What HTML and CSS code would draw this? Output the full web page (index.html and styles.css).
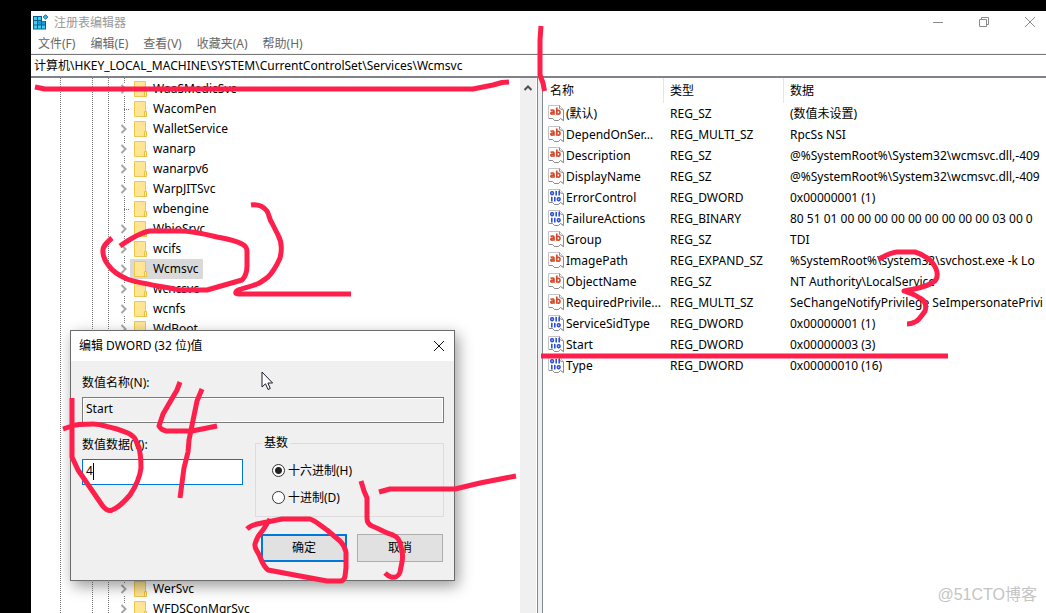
FILE: index.html
```html
<!DOCTYPE html>
<html lang="zh-CN">
<head>
<meta charset="utf-8">
<title>注册表编辑器</title>
<link rel="stylesheet" href="styles.css">
</head>
<body>
<svg class="defs" aria-hidden="true">
  <symbol id="folder" viewBox="0 0 13 16">
    <path d="M0.5 0.5H11.5V15.5H0.5Z" fill="#ffe594" stroke="#edc84b"/>
    <path d="M10.5 10.5H12.5V15.5H10.5Z" fill="#ffefb5" stroke="#e9c040"/>
  </symbol>
  <symbol id="string" viewBox="0 0 16 17">
    <path d="M0.5 0.5H11.5L15.5 4.5V16L12.5 13.5L10.5 15.5H6.5L4.5 13.5H0.5Z" fill="#fff" stroke="#c4c4c4"/>
    <path d="M11.5 0.5V3.5L15.5 5V15.5L12.5 13.5L10.5 15.5H6.5L4.5 13.5H1" fill="none" stroke="#8c8c8c"/>
    <g fill="none" stroke="#d84a2b" stroke-width="1.7">
      <path d="M2.5 5.4Q6 4.3 6 6.4V9.8M6 7.3Q2.8 6.9 2.8 8.4Q3.2 9.9 6 8.6"/>
      <path d="M8.8 2.6V9.8M8.8 5.8Q12 4.4 12 7.2Q12 10 8.8 8.8"/>
    </g>
  </symbol>
  <symbol id="binary" viewBox="0 0 16 17">
    <path d="M0.5 0.5H11.5L15.5 4.5V16L12.5 13.5L10.5 15.5H6.5L4.5 13.5H0.5Z" fill="#fff" stroke="#c4c4c4"/>
    <path d="M11.5 0.5V3.5L15.5 5V15.5L12.5 13.5L10.5 15.5H6.5L4.5 13.5H1" fill="none" stroke="#8c8c8c"/>
    <g fill="none" stroke="#2c4fd8" stroke-width="1.6">
      <rect x="2.8" y="2.8" width="2.6" height="2.8" rx="1"/>
      <path d="M8.2 2V6.4M11.2 2V6.4M7.4 2.6H8.2M10.4 2.6H11.2M3.8 8V12.4M6.8 8V12.4M3 8.6H3.8M6 8.6H6.8"/>
      <rect x="9.4" y="8.8" width="2.6" height="2.8" rx="1"/>
    </g>
  </symbol>
  <symbol id="chevron" viewBox="0 0 12 12">
    <path d="M3.5 2L7.5 6L3.5 10" fill="none" stroke="#a6a6a6" stroke-width="2"/>
  </symbol>
</svg>

<main class="window">
  <header class="titlebar">
    <svg class="app-icon" viewBox="0 0 16 16" aria-hidden="true">
      <path d="M0 2H9V7H13V15.5H0Z" fill="#0b5f87"/>
      <path d="M1 3H4V6H1ZM5 3H8V6H5ZM1 7H4V10.5H1ZM1 11.5H4V14.5H1ZM5 11.5H8V14.5H5ZM9 11.5H12V14.5H9Z" fill="#3fcdf7"/>
      <path d="M5 7H8V10.5H5ZM9 7.5H12V10.5H9Z" fill="#12a0dc"/>
      <path d="M12.5 0.7L14.8 3L12.5 5.3L10.2 3Z" fill="#3fbbe8" stroke="#0b6f9d"/>
    </svg>
    <h1 class="app-title">注册表编辑器</h1>
    <div class="window-buttons">
      <button class="window-button" aria-label="最小化"><svg viewBox="0 0 12 12"><path d="M1 6.5H11"/></svg></button>
      <button class="window-button" aria-label="还原"><svg viewBox="0 0 12 12"><path d="M1.5 3.5H8.5V10.5H1.5ZM3.5 3.5V1.5H10.5V8.5H8.5"/></svg></button>
      <button class="window-button" aria-label="关闭"><svg viewBox="0 0 12 12"><path d="M1 1L11 11M11 1L1 11"/></svg></button>
    </div>
  </header>
  <nav class="menubar">
    <button class="menu">文件(F)</button>
    <button class="menu">编辑(E)</button>
    <button class="menu">查看(V)</button>
    <button class="menu">收藏夹(A)</button>
    <button class="menu">帮助(H)</button>
  </nav>
  <input class="address" aria-label="地址" value="计算机\HKEY_LOCAL_MACHINE\SYSTEM\CurrentControlSet\Services\Wcmsvc">

  <div class="panes">
    <section class="tree-pane">
      <ul class="tree">
        <li class="node"><svg class="twist"><use href="#chevron"/></svg><span class="key"><svg class="folder"><use href="#folder"/></svg>WaaSMedicSvc</span></li>
        <li class="node"><span class="branch"></span><span class="key"><svg class="folder"><use href="#folder"/></svg>WacomPen</span></li>
        <li class="node"><svg class="twist"><use href="#chevron"/></svg><span class="key"><svg class="folder"><use href="#folder"/></svg>WalletService</span></li>
        <li class="node"><svg class="twist"><use href="#chevron"/></svg><span class="key"><svg class="folder"><use href="#folder"/></svg>wanarp</span></li>
        <li class="node"><svg class="twist"><use href="#chevron"/></svg><span class="key"><svg class="folder"><use href="#folder"/></svg>wanarpv6</span></li>
        <li class="node"><svg class="twist"><use href="#chevron"/></svg><span class="key"><svg class="folder"><use href="#folder"/></svg>WarpJITSvc</span></li>
        <li class="node"><span class="branch"></span><span class="key"><svg class="folder"><use href="#folder"/></svg>wbengine</span></li>
        <li class="node"><svg class="twist"><use href="#chevron"/></svg><span class="key"><svg class="folder"><use href="#folder"/></svg>WbioSrvc</span></li>
        <li class="node"><svg class="twist"><use href="#chevron"/></svg><span class="key"><svg class="folder"><use href="#folder"/></svg>wcifs</span></li>
        <li class="node"><svg class="twist"><use href="#chevron"/></svg><span class="key selected"><svg class="folder"><use href="#folder"/></svg>Wcmsvc</span></li>
        <li class="node"><svg class="twist"><use href="#chevron"/></svg><span class="key"><svg class="folder"><use href="#folder"/></svg>wcncsvc</span></li>
        <li class="node"><svg class="twist"><use href="#chevron"/></svg><span class="key"><svg class="folder"><use href="#folder"/></svg>wcnfs</span></li>
        <li class="node"><svg class="twist"><use href="#chevron"/></svg><span class="key"><svg class="folder"><use href="#folder"/></svg>WdBoot</span></li>
        <li class="covered"></li>
        <li class="node"><svg class="twist"><use href="#chevron"/></svg><span class="key"><svg class="folder"><use href="#folder"/></svg>WerSvc</span></li>
        <li class="node"><svg class="twist"><use href="#chevron"/></svg><span class="key"><svg class="folder"><use href="#folder"/></svg>WFDSConMgrSvc</span></li>
      </ul>
      <div class="scrollbar">
        <button class="scroll-up" aria-label="向上滚动"><svg viewBox="0 0 10 10"><path d="M1.5 7L5 3.5L8.5 7"/></svg></button>
      </div>
    </section>
    <div class="splitter"></div>
    <section class="list-pane">
      <table class="values">
        <thead>
          <tr><th class="col-name">名称</th><th class="col-type">类型</th><th>数据</th></tr>
        </thead>
        <tbody>
          <tr><td class="name"><svg class="kind"><use href="#string"/></svg>(默认)</td><td>REG_SZ</td><td>(数值未设置)</td></tr>
          <tr><td class="name"><svg class="kind"><use href="#string"/></svg>DependOnSer...</td><td>REG_MULTI_SZ</td><td>RpcSs NSI</td></tr>
          <tr><td class="name"><svg class="kind"><use href="#string"/></svg>Description</td><td>REG_SZ</td><td>@%SystemRoot%\System32\wcmsvc.dll,-409</td></tr>
          <tr><td class="name"><svg class="kind"><use href="#string"/></svg>DisplayName</td><td>REG_SZ</td><td>@%SystemRoot%\System32\wcmsvc.dll,-409</td></tr>
          <tr><td class="name"><svg class="kind"><use href="#binary"/></svg>ErrorControl</td><td>REG_DWORD</td><td>0x00000001 (1)</td></tr>
          <tr><td class="name"><svg class="kind"><use href="#binary"/></svg>FailureActions</td><td>REG_BINARY</td><td>80 51 01 00 00 00 00 00 00 00 00 00 03 00 0</td></tr>
          <tr><td class="name"><svg class="kind"><use href="#string"/></svg>Group</td><td>REG_SZ</td><td>TDI</td></tr>
          <tr><td class="name"><svg class="kind"><use href="#string"/></svg>ImagePath</td><td>REG_EXPAND_SZ</td><td>%SystemRoot%\system32\svchost.exe -k Lo</td></tr>
          <tr><td class="name"><svg class="kind"><use href="#string"/></svg>ObjectName</td><td>REG_SZ</td><td>NT Authority\LocalService</td></tr>
          <tr><td class="name"><svg class="kind"><use href="#string"/></svg>RequiredPrivile...</td><td>REG_MULTI_SZ</td><td>SeChangeNotifyPrivilege SeImpersonatePrivi</td></tr>
          <tr><td class="name"><svg class="kind"><use href="#binary"/></svg>ServiceSidType</td><td>REG_DWORD</td><td>0x00000001 (1)</td></tr>
          <tr><td class="name"><svg class="kind"><use href="#binary"/></svg>Start</td><td>REG_DWORD</td><td>0x00000003 (3)</td></tr>
          <tr><td class="name"><svg class="kind"><use href="#binary"/></svg>Type</td><td>REG_DWORD</td><td>0x00000010 (16)</td></tr>
        </tbody>
      </table>
    </section>
  </div>
</main>

<form class="dialog" role="dialog" aria-labelledby="dialog-title">
  <div class="dialog-bar">
    <h2 class="dialog-title" id="dialog-title">编辑 DWORD (32 位)值</h2>
    <button class="dialog-close" type="button" aria-label="关闭"><svg viewBox="0 0 12 12"><path d="M1 1L11 11M11 1L1 11"/></svg></button>
  </div>
  <div class="dialog-body">
    <label class="label" for="value-name">数值名称(N):</label>
    <input class="field readonly" id="value-name" value="Start" readonly>
    <div class="columns">
      <div class="data">
        <label class="label" for="value-data">数值数据(V):</label>
        <div class="caret-box"><input class="field active" id="value-data" value="4"></div>
      </div>
      <fieldset class="base">
        <legend>基数</legend>
        <label class="option"><input type="radio" name="base" checked>十六进制(H)</label>
        <label class="option"><input type="radio" name="base">十进制(D)</label>
      </fieldset>
    </div>
    <div class="actions">
      <button class="push default" type="button">确定</button>
      <button class="push" type="button">取消</button>
    </div>
  </div>
</form>

<svg class="pointer" viewBox="0 0 13 20" aria-hidden="true"><path d="M1 1V16L4.5 12.8L7 18.5L9.3 17.5L6.9 12H11.6Z" fill="#fff" stroke="#1a1a2a"/></svg>

<svg class="ink" viewBox="0 0 1046 613" aria-hidden="true">
  <path d="M35 87L45 89H473L493 85L502 82.5L509 82"/>
  <path d="M541 26L540 40V75L543 83L544.5 91"/>
  <path d="M112 238C106 243 102 247 103 252C103 257 105 261 109 266C113 272 118 275 127 279C137 283 160 286 180 290H207L242 280C246 276 247 272 247 266V252C247 248 246 246 242 244C235 240 228 239 217 237C205 234 192 231 180 231H150C143 232 130 239 120 246"/>
  <path d="M251 205C258 204 263 206 267 211C270 217 269 219 272 223L278 235C282 242 282 250 280 258C277 265 274 271 268 277C263 281 260 283 257 284C248 288 236 289 236 292Q235 294 239 294H351"/>
  <path d="M879 259C886 255 892 252 897 252H915C922 254 926 257 930 260C935 265 936 268 937 272C938 278 936 281 932 283C925 287 910 290 904 291C910 293 914 294 918 297C925 300 927 305 925 311C921 317 918 321 915 322Q911 324 907 324"/>
  <path d="M541 356H948"/>
  <path d="M180 382L177 390L163 414L159 426Q161 430 166 431H192L217 426"/>
  <path d="M202 389L197 401L189 440L188 452L184 468L180 498"/>
  <path d="M72 398V457L78 470L102 505C105 509 108 512 112 510C118 508 124 502 130 495C136 486 140 476 141 468C141 458 140 450 138 445C135 438 134 436 128 433C122 431 118 429 113 428C105 426 100 424 93 424C84 424 76 424 72 426L63 429"/>
  <path d="M247 529C250 526 253 525 257 524L282 519H310C316 521 321 526 327 530L340 541C344 545 345 548 346 552V568C345 574 346 581 340 581H327L300 576L268 570C264 567 262 562 260 557C258 551 254 549 255 544C257 536 260 534 263 530L270 519"/>
  <path d="M361 481L364 491L367 498V518Q367 524 372 526C380 529 385 533 393 535C398 537 400 540 401 547C403 553 403 557 402 562L400 572C399 576 395 578 391 577Q388 576 385 573"/>
  <path d="M379 492L390 489H455L480 483L516 476"/>
</svg>
<p class="watermark">@51CTO博客</p>
</body>
</html>
```
FILE: styles.css
```css
* { box-sizing: border-box; }

body {
  margin: 0;
  height: 100vh;
  padding: 11px 0 0 31px;
  position: relative;
  overflow: hidden;
  background: #000;
  color: #000;
  font: 12px/20px "Noto Sans", "Noto Sans CJK SC", sans-serif;
}

button, input { font: inherit; color: inherit; }
button { padding: 0; border: 0; background: none; }
h1, h2, p, ul { margin: 0; padding: 0; font-size: inherit; font-weight: 400; }
svg { display: block; flex: none; }
.defs { position: absolute; width: 0; height: 0; }

.window { display: flex; flex-direction: column; height: 100%; overflow: hidden; background: #fff; }

.titlebar { display: flex; align-items: center; height: 22px; padding-left: 2px; color: #999; }
.app-icon { width: 16px; height: 16px; }
.app-title { margin-left: 5px; padding-top: 2px; }
.window-buttons { display: flex; margin: 0 -7px 0 auto; }
.window-button { display: grid; place-items: center; width: 46px; height: 22px; }
.window-button svg { width: 12px; height: 12px; fill: none; stroke: #8a8a8a; }

.menubar { display: flex; gap: 15px; height: 21px; padding: 1px 0 0 7px; border-bottom: 1px solid #f0f0f0; color: #666; }

.address { width: 100%; height: 24px; padding: 0 3px 1px; border: 0; border-top: 1px solid #7a7a7a; border-bottom: 2px solid #7f8288; background: #fff; }

.panes { display: flex; flex: 1; min-height: 0; }

.tree-pane { display: flex; width: 506px; overflow: hidden; }
.tree {
  flex: 1;
  padding-top: 1px;
  list-style: none;
  background-image:
    repeating-linear-gradient(#777 0 1px, #fff 1px 2px),
    repeating-linear-gradient(#777 0 1px, #fff 1px 2px),
    repeating-linear-gradient(#777 0 1px, #fff 1px 2px),
    repeating-linear-gradient(#777 0 1px, #fff 1px 2px);
  background-repeat: no-repeat;
  background-size: 1px 100%;
  background-position: 29px 0, 61px 0, 77px 0, 93px 0;
}
.node { display: flex; align-items: center; height: 20px; padding-left: 87px; }
.twist { width: 12px; height: 12px; background: #fff; }
.branch { width: 12px; height: 1px; background: repeating-linear-gradient(90deg, #777 0 1px, #fff 1px 2px) 6px 0 no-repeat; }
.key { display: flex; align-items: center; gap: 6px; height: 20px; padding: 0 4px; }
.selected { background: #d9d9d9; }
.folder { width: 13px; height: 16px; }
.covered { height: 240px; }

.scrollbar { width: 16px; margin-right: 1px; background: #f0f0f0; }
.scroll-up { display: grid; place-items: center; width: 16px; height: 20px; }
.scroll-up svg { width: 10px; height: 10px; fill: none; stroke: #505050; stroke-width: 2; }

.splitter { width: 6px; border: solid #828790; border-width: 0 1px; background: #f0f0f0; }

.list-pane { flex: 1; min-width: 0; overflow: hidden; }
.values { width: 100%; table-layout: fixed; border-spacing: 0; font-size: 12px; white-space: nowrap; }
.values th { height: 25px; padding: 0 0 0 6px; border-right: 1px solid #e5e5e5; font-weight: 400; text-align: left; }
.values th:last-child { border: 0; }
.values .col-name { width: 121px; padding-left: 7px; }
.col-type { width: 120px; }
.values td { height: 21px; padding: 0 0 0 6px; }
.values .name { display: flex; align-items: center; gap: 2px; padding-left: 5px; }
.kind { width: 16px; height: 17px; }

.dialog { position: absolute; left: 70px; top: 330px; width: 385px; border: 1px solid #6b6b6b; background: #f0f0f0; box-shadow: 3px 5px 14px rgba(0, 0, 0, .4); }
.dialog-bar { display: flex; align-items: center; justify-content: space-between; height: 30px; padding-left: 8px; background: #fff; }
.dialog-close { display: grid; place-items: center; width: 30px; height: 30px; }
.dialog-close svg { width: 12px; height: 12px; fill: none; stroke: #111; }
.dialog-body { padding: 12px 10px 18px 11px; }
.label { display: block; height: 24px; }
.field { display: block; width: 100%; height: 26px; padding: 0 3px 3px; border: 1px solid #7a7a7a; outline: 0; background: #fff; }
.readonly { background: #f0f0f0; box-shadow: inset 0 0 0 1px #fff; }
.active { border-color: #0078d7; }
.columns { display: grid; grid-template-columns: 161px 1fr; gap: 12px; padding-top: 10px; }
.data { padding-top: 2px; }
.caret-box { position: relative; }
.caret-box::after { content: ""; position: absolute; left: 11px; top: 4px; width: 1px; height: 17px; background: #000; }
.base { margin: 0; padding: 4px 16px 5px; border: 1px solid #dcdcdc; }
.base legend { margin-left: -10px; padding: 0 2px; }
.option { display: flex; align-items: center; gap: 3px; height: 27px; }
.option input { appearance: none; width: 13px; height: 13px; margin: 0; border: 1px solid #333; border-radius: 50%; background: #fff; }
.option input:checked { background: radial-gradient(circle, #222 0 3px, #fff 4px); }
.actions { display: flex; justify-content: flex-end; gap: 10px; padding: 17px 1px 0 0; }
.push { width: 86px; height: 28px; border: 1px solid #adadad; background: #e1e1e1; }
.default { border: 2px solid #0078d7; }

.pointer { position: absolute; left: 261px; top: 371px; width: 13px; height: 20px; }
.ink { position: absolute; left: 0; top: 0; width: 1046px; height: 613px; fill: none; stroke: #ff1f4b; stroke-width: 5; stroke-linejoin: round; pointer-events: none; }
.watermark { position: absolute; right: 9px; bottom: 8px; color: #c4c4c4; font: 16px/20px "Liberation Sans", "Noto Sans CJK SC", sans-serif; }
```
